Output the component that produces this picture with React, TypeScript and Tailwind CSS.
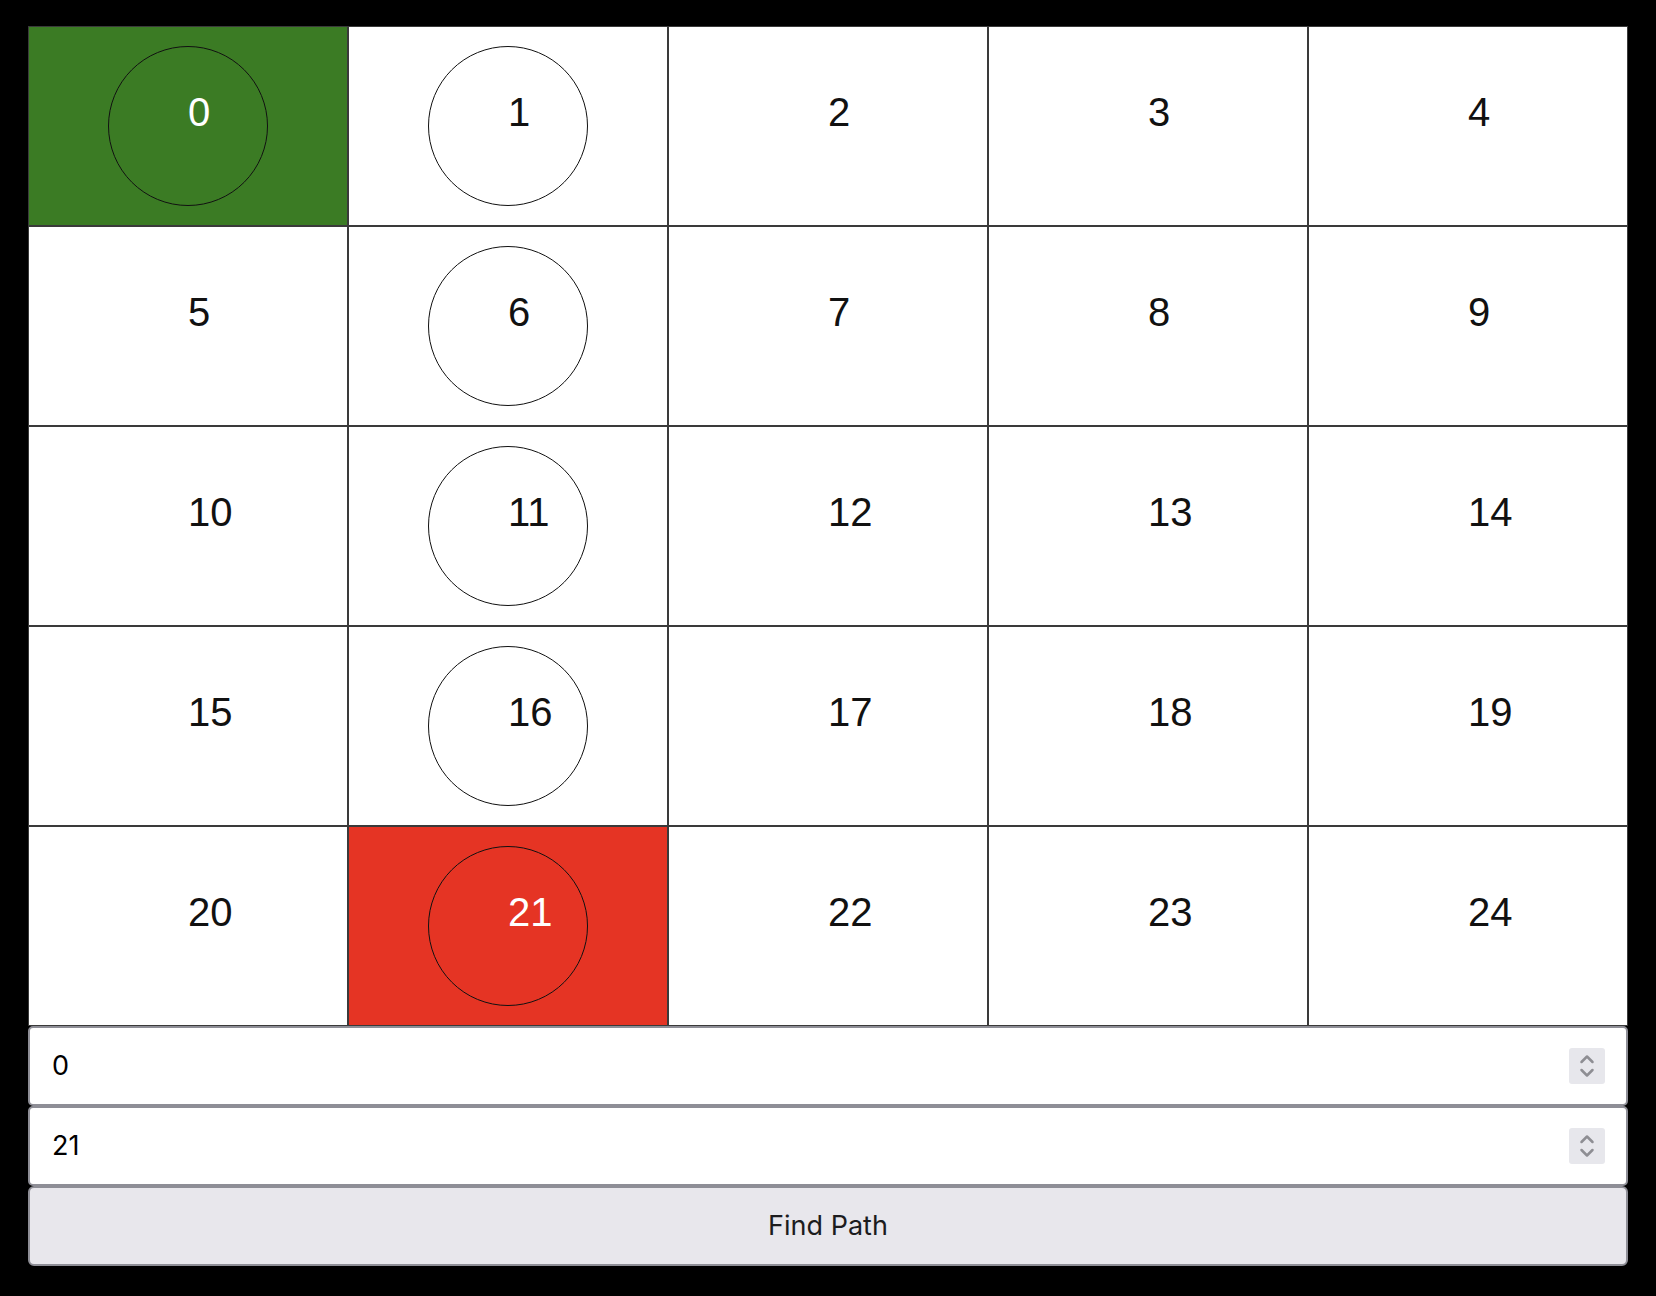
const COLS = 5;
const CELLS = Array.from({ length: 25 }, (_, i) => i);
const START = 0;
const END = 21;
const PATH = [0, 1, 6, 11, 16, 21];

function Spinner() {
  return (
    <div className="flex size-[36px] shrink-0 items-center justify-center rounded-[3px] bg-[#e7e7ec]" aria-hidden="true">
      <svg width="36" height="36" viewBox="0 0 36 36" fill="none">
        <path d="M12.5 14 L18 8.5 L23.5 14" stroke="#8e8e93" strokeWidth="2.5" strokeLinecap="round" strokeLinejoin="round" />
        <path d="M12.5 22 L18 27.5 L23.5 22" stroke="#8e8e93" strokeWidth="2.5" strokeLinecap="round" strokeLinejoin="round" />
      </svg>
    </div>
  );
}

function NumberField({ value }: { value: string }) {
  return (
    <div className="flex h-[80px] items-center rounded-[5px] border-2 border-[#8e8e96] bg-white pl-[22px] pr-[21px]">
      <input
        readOnly
        value={value}
        className="min-w-0 flex-1 bg-transparent text-[27px] text-black outline-none [font-family:Inter,'Noto_Sans',sans-serif]"
      />
      <Spinner />
    </div>
  );
}

export default function App() {
  return (
    <div className="h-screen bg-black px-[28px] pt-[26px]">
      <div className="grid w-[1600px] grid-cols-5">
        {CELLS.map((i) => {
          const onPath = PATH.includes(i);
          const colored = i === START || i === END;
          return (
            <div
              key={i}
              data-col={i % COLS}
              className={
                "grid h-[200px] border border-[#3a3a3a] " +
                (i === START ? "bg-[#3b7b24]" : i === END ? "bg-[#e53424]" : "bg-white")
              }
            >
              {onPath ? (
                <div className="col-start-1 row-start-1 size-[160px] place-self-center rounded-full border-[1.5px] border-[#111]" />
              ) : null}
              <div
                className={
                  "col-start-1 row-start-1 ml-[50%] self-start justify-self-start pt-[55px] text-[40px] [font-family:'Liberation_Sans',Arial,sans-serif] " +
                  (colored ? "text-white" : "text-[#111]")
                }
              >
                {i}
              </div>
            </div>
          );
        })}
      </div>
      <div className="flex w-[1600px] flex-col">
        <NumberField value="0" />
        <NumberField value="21" />
        <button className="h-[80px] rounded-[6px] border-2 border-[#8e8e96] bg-[#e8e7ec] text-[27px] text-[#1c1c1e] [font-family:Inter,'Noto_Sans',sans-serif]">
          Find Path
        </button>
      </div>
    </div>
  );
}
